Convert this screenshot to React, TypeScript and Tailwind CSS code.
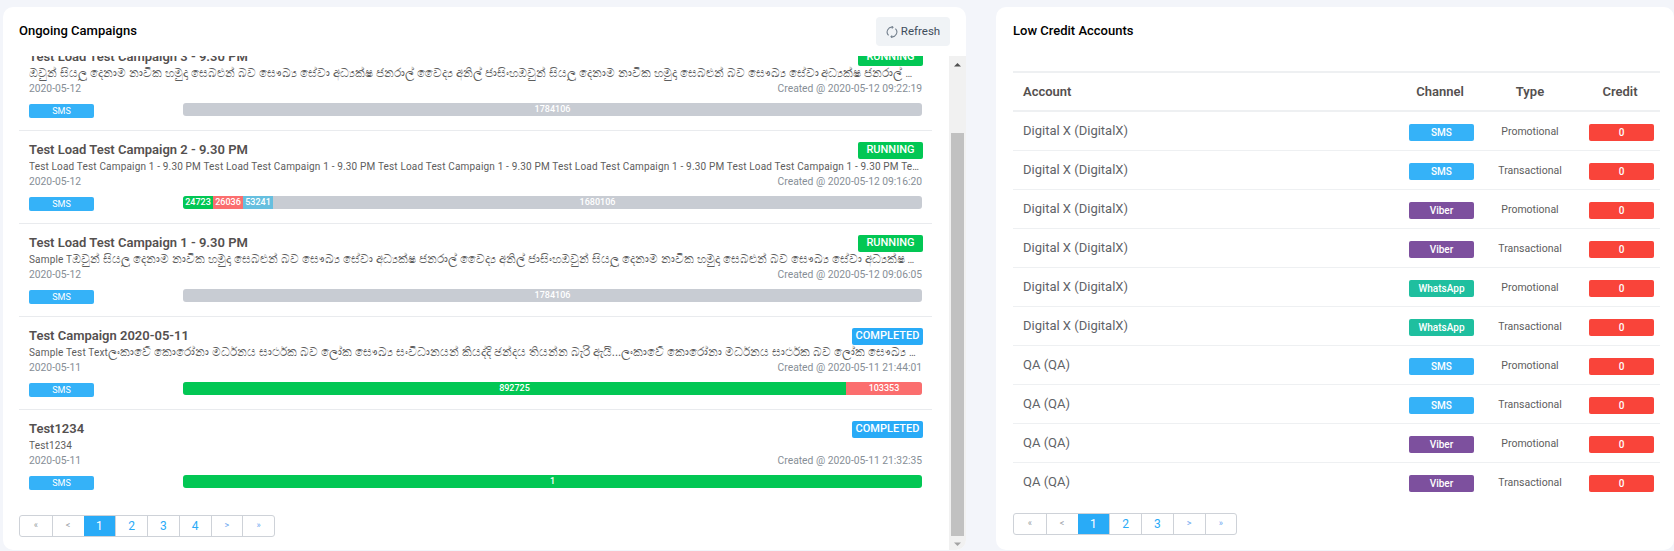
const font = { fontFamily: 'Roboto, "Noto Sans", sans-serif' };

const sinhalaOne = 'ඔවුන් සියලු දෙනාම නාවික හමුදා සෙබළුන් බව සෞඛ්‍ය සේවා අධ්‍යක්ෂ ජනරාල් වෛද්‍ය අනිල් ජාසිංහඔවුන් සියලු දෙනාම නාවික හමුදා සෙබළුන් බව සෞඛ්‍ය සේවා අධ්‍යක්ෂ ජනරාල් වෛද්‍ය අනිල් ජාසිංහ';
const sinhalaTwo = 'ඔවුන් සියලු දෙනාම නාවික හමුදා සෙබළුන් බව සෞඛ්‍ය සේවා අධ්‍යක්ෂ ජනරාල් වෛද්‍ය අනිල් ජාසිංහඔවුන් සියලු දෙනාම නාවික හමුදා සෙබළුන් බව සෞඛ්‍ය සේවා අධ්‍යක්ෂ ජනරාල් වෛද්‍ය අනිල් ජාසිංහ';
const sinhalaThree = 'ලංකාවේ කොරෝනා මර්ධනය සාර්ථක බව ලෝක සෞඛ්‍ය සංවිධානයන් කියද්දි ඡන්දය තියන්න බැරි ඇයි...ලංකාවේ කොරෝනා මර්ධනය සාර්ථක බව ලෝක සෞඛ්‍ය සංවිධානයන් කියද්දි ඡන්දය තියන්න බැරි ඇයි';
const loadText = 'Test Load Test Campaign 1 - 9.30 PM Test Load Test Campaign 1 - 9.30 PM Test Load Test Campaign 1 - 9.30 PM Test Load Test Campaign 1 - 9.30 PM Test Load Test Campaign 1 - 9.30 PM Test Load';

const campaigns = [
  { title: 'Test Load Test Campaign 3 - 9.30 PM', text: '', local: sinhalaOne, date: '2020-05-12', created: '2020-05-12 09:22:19', status: 'RUNNING', bar: 'grey' },
  { title: 'Test Load Test Campaign 2 - 9.30 PM', text: loadText, local: '', date: '2020-05-12', created: '2020-05-12 09:16:20', status: 'RUNNING', bar: 'mixed' },
  { title: 'Test Load Test Campaign 1 - 9.30 PM', text: 'Sample T', local: sinhalaTwo, date: '2020-05-12', created: '2020-05-12 09:06:05', status: 'RUNNING', bar: 'grey' },
  { title: 'Test Campaign 2020-05-11', text: 'Sample Test Text', local: sinhalaThree, date: '2020-05-11', created: '2020-05-11 21:44:01', status: 'COMPLETED', bar: 'split' },
  { title: 'Test1234', text: 'Test1234', local: '', date: '2020-05-11', created: '2020-05-11 21:32:35', status: 'COMPLETED', bar: 'green' },
];

const accounts = [
  ['Digital X (DigitalX)', 'SMS', 'Promotional'],
  ['Digital X (DigitalX)', 'SMS', 'Transactional'],
  ['Digital X (DigitalX)', 'Viber', 'Promotional'],
  ['Digital X (DigitalX)', 'Viber', 'Transactional'],
  ['Digital X (DigitalX)', 'WhatsApp', 'Promotional'],
  ['Digital X (DigitalX)', 'WhatsApp', 'Transactional'],
  ['QA (QA)', 'SMS', 'Promotional'],
  ['QA (QA)', 'SMS', 'Transactional'],
  ['QA (QA)', 'Viber', 'Promotional'],
  ['QA (QA)', 'Viber', 'Transactional'],
];

const channelColor: Record<string, string> = {
  SMS: 'bg-[#35b2f8]',
  Viber: 'bg-[#7d509e]',
  WhatsApp: 'bg-[#1fbf9f]',
};

function Segment({ className, label }: { className: string; label: string }) {
  return (
    <div className={`flex items-center justify-center text-white text-[9px] font-medium leading-none ${className}`}>{label}</div>
  );
}

function ProgressBar({ kind }: { kind: string }) {
  return (
    <div className="flex flex-1 h-[13px] rounded-[3px] overflow-hidden bg-[#c8ccd3]">
      {kind === 'grey' && <Segment className="flex-1" label="1784106" />}
      {kind === 'mixed' && (
        <>
          <Segment className="w-[30px] bg-[#02c754]" label="24723" />
          <Segment className="w-[30px] bg-[#fb6e6e]" label="26036" />
          <Segment className="w-[30px] bg-[#66bfdf]" label="53241" />
          <Segment className="flex-1" label="1680106" />
        </>
      )}
      {kind === 'split' && (
        <>
          <Segment className="flex-1 bg-[#02c754]" label="892725" />
          <Segment className="w-[76px] bg-[#fb6e6e]" label="103353" />
        </>
      )}
      {kind === 'green' && <Segment className="flex-1 bg-[#02c754]" label="1" />}
    </div>
  );
}

function CampaignRow({ c, last }: { c: (typeof campaigns)[number]; last: boolean }) {
  return (
    <div className={`h-[93px] pt-[9px] px-[10px] ${last ? '' : 'border-b border-[#e9ebee]'}`}>
      <div className="flex justify-between h-[19px]">
        <span className="text-[13px] font-semibold leading-[20px] text-[#54504f]">{c.title}</span>
        <span className={`mt-[2px] mr-[-1px] h-[17px] rounded-[2px] flex items-center justify-center text-white text-[11px] font-medium ${c.status === 'RUNNING' ? 'w-[65px] bg-[#02c754]' : 'w-[71px] bg-[#29abf7]'}`}>
          {c.status}
        </span>
      </div>
      <div className="h-[15px] text-[10px] leading-[15px] tracking-[0.17px] text-[#5d5d5d] truncate">
        {c.text}
        {c.local && <span className="text-[12px] tracking-normal">{c.local}</span>}
      </div>
      <div className="flex justify-between h-[15px] text-[10.3px] leading-[15px] text-[#868e96]">
        <span>{c.date}</span>
        <span>Created @ {c.created}</span>
      </div>
      <div className="flex mt-[7px]">
        <div className="w-[65px] h-[14px] mt-[1px] mr-[89px] rounded-[2px] bg-[#35b2f8] flex items-center justify-center text-white text-[9px] leading-none">SMS</div>
        <ProgressBar kind={c.bar} />
      </div>
    </div>
  );
}

function Pagination({ pages }: { pages: number }) {
  const labels = ['«', '<', ...Array.from({ length: pages }, (_, i) => String(i + 1)), '>', '»'];
  return (
    <div className="flex w-fit h-[22px] rounded-[3px] border border-[#ced2d8] bg-white">
      {labels.map((label, i) => (
        <div
          key={i}
          className={`w-[31.75px] flex items-center justify-center ${i > 0 ? 'border-l border-[#ced2d8]' : ''} ${
            label === '1'
              ? 'bg-[#29abf7] text-white text-[12px] border-l-0'
              : i < 2
                ? 'text-[#9aa0a6] text-[9px]'
                : i >= pages + 2
                  ? 'text-[#6ea8f0] text-[9px]'
                  : 'text-[#29abf7] text-[12px]'
          }`}
        >
          {label}
        </div>
      ))}
    </div>
  );
}

function ScrollBar() {
  return (
    <div className="w-[17px] bg-[#f1f1f1] flex flex-col items-center shrink-0">
      <svg className="h-[17px] w-[17px] shrink-0" viewBox="0 0 17 17"><path d="M5 10.5 L8.5 7 L12 10.5 Z" fill="#505050" /></svg>
      <div className="w-[13px] mt-[60px] h-[403px] bg-[#c1c1c1] shrink-0" />
      <svg className="h-[17px] w-[17px] shrink-0" viewBox="0 0 17 17"><path d="M5 6.5 L8.5 10 L12 6.5 Z" fill="#a3a3a3" /></svg>
    </div>
  );
}

export default function App() {
  return (
    <div className="h-[551px] overflow-hidden bg-[#f3f5fa] flex pl-[3px] pt-[7px] gap-[30px]" style={font}>
      {/* campaigns */}
      <div className="w-[963px] h-[543px] bg-white rounded-[10px] overflow-hidden flex flex-col shrink-0">
        <div className="h-[49px] shrink-0 pl-[16px] pr-[16px] flex items-start justify-between">
          <h2 className="mt-[15px] text-[13px] font-medium leading-[18px] text-black">Ongoing Campaigns</h2>
          <button className="mt-[10px] w-[74px] h-[29px] rounded-[4px] bg-[#f0f3f6] flex items-center justify-center gap-[3px] text-[11.5px] text-[#3f4d5c]">
            <svg className="w-[12px] h-[12px]" viewBox="0 0 12 12" fill="none" stroke="#76828f" strokeWidth="1.1">
              <path d="M2.6 9.4A4.8 4.8 0 0 1 7 1.3" />
              <path d="M9.4 2.6A4.8 4.8 0 0 1 5 10.7" />
              <path d="M5.8 0.3 L7 1.3 L5.9 2.5" />
              <path d="M6.2 11.7 L5 10.7 L6.1 9.5" />
            </svg>
            Refresh
          </button>
        </div>
        <div className="flex flex-1 min-h-0">
          <div className="flex-1 min-w-0 overflow-hidden pl-[16px] pr-[17px]">
            <div className="-mt-[18px]">
              {campaigns.map((c, i) => (
                <CampaignRow key={c.title} c={c} last={i === campaigns.length - 1} />
              ))}
            </div>
            <div className="mt-[12px]">
              <Pagination pages={4} />
            </div>
          </div>
          <ScrollBar />
        </div>
      </div>

      {/* low credit */}
      <div className="flex-1 h-[543px] bg-white rounded-[10px] pl-[17px] pr-[14px]">
        <h2 className="pt-[15px] text-[13px] font-medium leading-[18px] text-black">Low Credit Accounts</h2>
        <table className="mt-[31px] w-full border-collapse border-t-2 border-[#eef0f2]">
          <thead>
            <tr className="h-[39px] border-b-[2px] border-[#eef0f2] text-[13px] text-[#54504f]">
              <th className="text-left font-semibold pl-[10px]">Account</th>
              <th className="w-[80px] font-semibold">Channel</th>
              <th className="w-[100px] font-semibold">Type</th>
              <th className="w-[80px] font-semibold">Credit</th>
            </tr>
          </thead>
          <tbody>
            {accounts.map((a, i) => (
              <tr key={i} className={`h-[39px] ${i < accounts.length - 1 ? 'border-b border-[#eef0f2]' : ''}`}>
                <td className="pl-[10px] text-[13px] text-[#5f6368]">{a[0]}</td>
                <td>
                  <div className={`ml-[9px] mt-[3px] w-[65px] h-[17px] rounded-[2px] flex items-center justify-center text-white text-[10px] font-medium ${channelColor[a[1]]}`}>{a[1]}</div>
                </td>
                <td className="pt-[2px] text-center text-[10.5px] text-[#5d5d5d]">{a[2]}</td>
                <td>
                  <div className="ml-[9px] mt-[3px] w-[65px] h-[17px] rounded-[2px] bg-[#f9443a] flex items-center justify-center text-white text-[10px] font-medium">0</div>
                </td>
              </tr>
            ))}
          </tbody>
        </table>
        <div className="mt-[12px]">
          <Pagination pages={3} />
        </div>
      </div>
    </div>
  );
}
